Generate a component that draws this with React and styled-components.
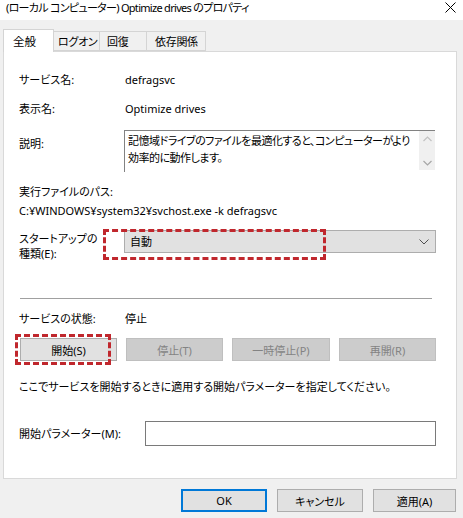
import React from "react";
import styled, { createGlobalStyle } from "styled-components";

const Global = createGlobalStyle`
  html, body { margin: 0; padding: 0; background: #f0f0f0; }
  body {
    font-family: "Noto Sans", "Noto Sans CJK JP", sans-serif;
    font-size: 11px;
    color: #000;
    font-feature-settings: "palt";
  }
`;

const Window = styled.div`
  width: 463px;
  height: 518px;
  background: #f0f0f0;
  display: flex;
  flex-direction: column;
  overflow: hidden;
`;

const TitleBar = styled.div`
  height: 20px;
  background: #fff;
  display: flex;
  align-items: center;
  justify-content: space-between;
  padding: 0 6px 0 6px;
  font-size: 11px;
  line-height: 16px;
  white-space: nowrap;
`;

const TitleText = styled.span`
  margin-top: -4px;
  letter-spacing: -0.7px;
`;

const CloseIcon = styled.svg`
  width: 11px;
  height: 11px;
  margin-top: -5px;
  margin-right: 1px;
`;

const TabStrip = styled.div`
  display: flex;
  align-items: flex-end;
  margin: 9px 0 0 3px;
  height: 22px;
  position: relative;
  z-index: 1;
`;

const Tab = styled.div`
  box-sizing: border-box;
  flex: none;
  width: ${(p) => p.$w}px;
  height: ${(p) => (p.$active ? 23 : 20)}px;
  border: 1px solid #d4d4d4;
  border-left: ${(p) => (p.$first ? "1px solid #d4d4d4" : "none")};
  border-bottom: ${(p) => (p.$active ? "none" : "1px solid #d4d4d4")};
  background: ${(p) => (p.$active ? "#fff" : "#f0f0f0")};
  padding-left: ${(p) => p.$pl}px;
  display: flex;
  align-items: center;
  white-space: nowrap;
  overflow: hidden;
  font-size: ${(p) => (p.$active ? 11.5 : 11)}px;
  letter-spacing: ${(p) => (p.$active ? 0 : -0.3)}px;
  margin-bottom: ${(p) => (p.$active ? -1 : 0)}px;
`;

const Panel = styled.div`
  box-sizing: border-box;
  margin-left: 3px;
  width: 454px;
  height: 428px;
  background: #fff;
  border: 1px solid #d9d9d9;
  padding: 0 0 0 15px;
  position: relative;
`;

const Row = styled.div`
  display: flex;
  align-items: ${(p) => p.$align || "center"};
  height: ${(p) => p.$h}px;
  margin-top: ${(p) => p.$mt}px;
  line-height: 16px;
`;

const Label = styled.div`
  width: ${(p) => p.$w || 106}px;
  flex: none;
  white-space: nowrap;
  line-height: ${(p) => p.$lh || 16}px;
  margin-top: ${(p) => p.$mt || 0}px;
`;

const Value = styled.div`
  white-space: nowrap;
`;

const TextArea = styled.div`
  box-sizing: border-box;
  width: 311px;
  height: 42px;
  margin-left: -1px;
  border-top: 1px solid #828282;
  border-left: 1px solid #828282;
  display: flex;
`;

const TextAreaText = styled.div`
  flex: 1;
  padding: 1px 0 0 3px;
  line-height: 17px;
  white-space: nowrap;
  letter-spacing: -0.5px;
`;

const ScrollBar = styled.div`
  width: 16px;
  height: 39px;
  background: #f0f0f0;
  display: flex;
  flex-direction: column;
  align-items: center;
  justify-content: space-between;
  padding: 5px 0 4px;
  box-sizing: border-box;
`;

const Select = styled.div`
  box-sizing: border-box;
  width: 312px;
  height: 23px;
  margin-left: -1px;
  background: #e1e1e1;
  border: 1px solid #adadad;
  display: flex;
  align-items: center;
  justify-content: space-between;
  padding: 0 6px 0 5px;
`;

const Separator = styled.div`
  height: 1px;
  width: 412px;
  margin: 36px 0 0 1px;
  background: #a0a0a0;
`;

const ButtonRow = styled.div`
  display: flex;
  gap: 9px;
  margin-top: 11px;
  margin-left: 1px;
`;

const SvcButton = styled.div`
  box-sizing: border-box;
  width: ${(p) => p.$w || 97}px;
  height: 23px;
  display: flex;
  align-items: center;
  justify-content: center;
  white-space: nowrap;
  background: ${(p) => (p.$disabled ? "#cccccc" : "#e1e1e1")};
  border: 1px solid ${(p) => (p.$disabled ? "#bfbfbf" : "#adadad")};
  color: ${(p) => (p.$disabled ? "#838383" : "#000")};
`;

const Hint = styled.div`
  margin-top: 18px;
  line-height: 16px;
  white-space: nowrap;
`;

const Input = styled.div`
  box-sizing: border-box;
  width: 291px;
  height: 25px;
  border: 1px solid #7a7a7a;
  background: #fff;
`;

const Footer = styled.div`
  display: flex;
  justify-content: flex-end;
  gap: 10px;
  margin-top: 10px;
  padding-right: 7px;
`;

const DlgButton = styled.div`
  box-sizing: border-box;
  width: ${(p) => p.$w}px;
  height: 23px;
  display: flex;
  align-items: center;
  justify-content: center;
  white-space: nowrap;
  background: #e1e1e1;
  border: ${(p) => (p.$default ? "2px solid #0078d7" : "1px solid #adadad")};
`;

const Annotation = styled.div`
  position: absolute;
  left: ${(p) => p.$x}px;
  top: ${(p) => p.$y}px;
  width: ${(p) => p.$w}px;
  height: ${(p) => p.$h}px;
  box-sizing: border-box;
  border: 3px dashed #c0272d;
  pointer-events: none;
`;

const Chevron = ({ up }) => (
  <svg width="9" height="6" viewBox="0 0 9 6">
    <path
      d={up ? "M0.5 5 L4.5 1 L8.5 5" : "M0.5 1 L4.5 5 L8.5 1"}
      fill="none"
      stroke={up ? "#c2c2c2" : "#a6a6a6"}
      strokeWidth="1.2"
    />
  </svg>
);

export default function App() {
  return (
    <>
      <Global />
      <Window>
        <TitleBar>
          <TitleText>(ローカル コンピューター) Optimize drives のプロパティ</TitleText>
          <CloseIcon viewBox="0 0 11 11">
            <path d="M0.5 0.5 L10.5 10.5 M10.5 0.5 L0.5 10.5" stroke="#000" strokeWidth="1" />
          </CloseIcon>
        </TitleBar>
        <TabStrip>
          <Tab $active $first $w={51} $pl={9}>全般</Tab>
          <Tab $w={46} $pl={4}>ログオン</Tab>
          <Tab $w={47} $pl={7}>回復</Tab>
          <Tab $w={59} $pl={8}>依存関係</Tab>
        </TabStrip>
        <Panel>
          <Row $h={16} $mt={20}>
            <Label>サービス名:</Label>
            <Value>defragsvc</Value>
          </Row>
          <Row $h={16} $mt={13}>
            <Label>表示名:</Label>
            <Value>Optimize drives</Value>
          </Row>
          <Row $h={42} $mt={13} $align="flex-start">
            <Label $mt={6}>説明:</Label>
            <TextArea>
              <TextAreaText>
                記憶域ドライブのファイルを最適化すると、コンピューターがより
                <br />
                効率的に動作します。
              </TextAreaText>
              <ScrollBar>
                <Chevron up />
                <Chevron />
              </ScrollBar>
            </TextArea>
          </Row>
          <Row $h={16} $mt={12}>
            <Value>実行ファイルのパス:</Value>
          </Row>
          <Row $h={16} $mt={3}>
            <Value>C:¥WINDOWS¥system32¥svchost.exe -k defragsvc</Value>
          </Row>
          <Row $h={32} $mt={11} $align="flex-start">
            <Label $lh={15} $mt={1}>
              スタートアップの
              <br />
              種類(E):
            </Label>
            <Select>
              <span>自動</span>
              <svg width="10" height="6" viewBox="0 0 10 6">
                <path d="M0.5 0.5 L5 5 L9.5 0.5" fill="none" stroke="#505050" strokeWidth="1" />
              </svg>
            </Select>
          </Row>
          <Separator />
          <Row $h={16} $mt={12}>
            <Label>サービスの状態:</Label>
            <Value>停止</Value>
          </Row>
          <ButtonRow>
            <SvcButton>開始(S)</SvcButton>
            <SvcButton $disabled>停止(T)</SvcButton>
            <SvcButton $disabled $w={98}>一時停止(P)</SvcButton>
            <SvcButton $disabled>再開(R)</SvcButton>
          </ButtonRow>
          <Hint>ここでサービスを開始するときに適用する開始パラメーターを指定してください。</Hint>
          <Row $h={25} $mt={26}>
            <Label $w={126}>開始パラメーター(M):</Label>
            <Input />
          </Row>
          <Annotation $x={99} $y={177} $w={223} $h={31} />
          <Annotation $x={11} $y={282} $w={96} $h={31} />
        </Panel>
        <Footer>
          <DlgButton $w={86} $default>OK</DlgButton>
          <DlgButton $w={86}>キャンセル</DlgButton>
          <DlgButton $w={83}>適用(A)</DlgButton>
        </Footer>
      </Window>
    </>
  );
}
